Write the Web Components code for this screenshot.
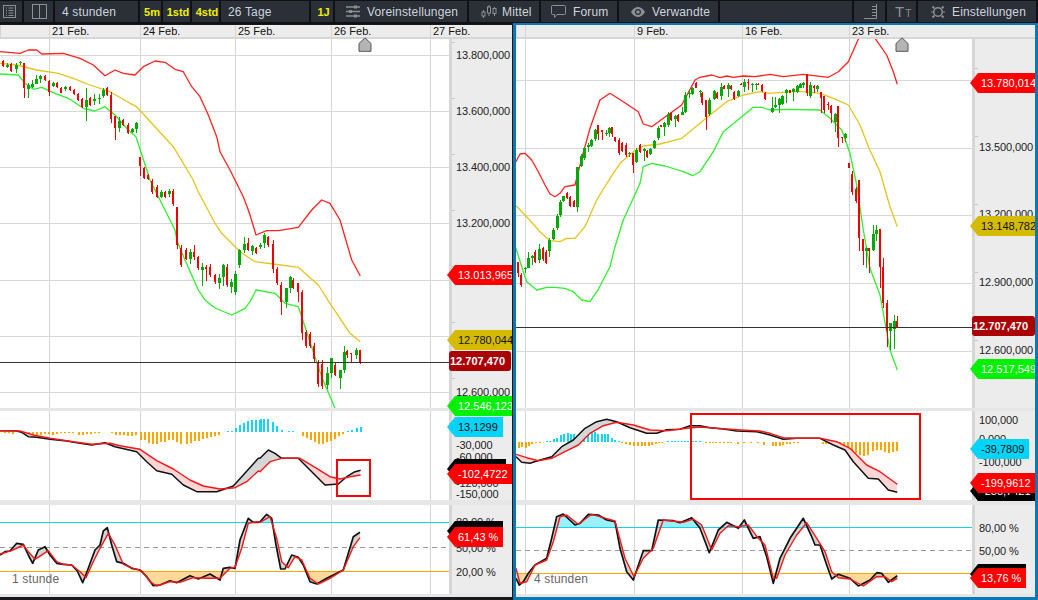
<!DOCTYPE html>
<html lang="de">
<head>
<meta charset="utf-8">
<title>Chart</title>
<style>
  html, body { margin: 0; height: 100%; background: #17191d; overflow: hidden; }
  body { display: flex; flex-direction: column; width: 1038px; height: 600px; font-family: "Liberation Sans", Arial, sans-serif; }
  .charts { display: flex; gap: 1px; height: 576px; }
</style>
</head>
<body>
<trade-toolbar>
  <tool-item style="width:24px;--pad:3px"><tool-icon name="list"></tool-icon></tool-item>
  <tool-item style="width:31px;--pad:8px"><tool-icon name="split"></tool-icon></tool-item>
  <tool-item style="width:85px;--pad:7px">4 stunden</tool-item>
  <tool-item hot style="width:23px">5m</tool-item>
  <tool-item hot style="width:29px">1std</tool-item>
  <tool-item hot style="width:29px">4std</tool-item>
  <tool-item style="width:90px;--pad:7px">26 Tage</tool-item>
  <tool-item hot style="width:24px">1J</tool-item>
  <tool-item style="width:134px;--pad:11px;--gap:7px"><tool-icon name="sliders"></tool-icon>Voreinstellungen</tool-item>
  <tool-item style="width:72px;--pad:12px;--gap:5px"><tool-icon name="candles"></tool-icon>Mittel</tool-item>
  <tool-item style="width:78px;--pad:10px;--gap:7px"><tool-icon name="bubble"></tool-icon>Forum</tool-item>
  <tool-item style="width:101px;--pad:12px;--gap:7px"><tool-icon name="eye"></tool-icon>Verwandte</tool-item>
  <tool-item style="width:134px"></tool-item>
  <tool-item style="width:33px;--pad:10px"><tool-icon name="rows"></tool-icon></tool-item>
  <tool-item style="width:31px;--pad:8px"><tool-icon name="size"></tool-icon></tool-item>
  <tool-item style="width:120px;--pad:13px;--gap:7px"><tool-icon name="gear"></tool-icon>Einstellungen</tool-item>
</trade-toolbar>
<div class="charts">
  <chart-panel name="left"></chart-panel>
  <chart-panel name="right" active></chart-panel>
</div>

<script>
// reference coordinates were read from 3x crops, so scale them back to page pixels
function crop(ox, oy, flat) {
  const pts = [];
  for (let i = 0; i < flat.length; i += 2) pts.push([ox + flat[i] / 3, oy + flat[i + 1] / 3]);
  return pts;
}

function candles(ox, oy, list) {
  return list.map(([x, hi, lo, c, top, bot]) => {
    const range = lo - hi;
    return {
      x: ox + x / 3,
      hi: oy + hi / 3,
      lo: oy + lo / 3,
      c,
      top: oy + (top === undefined ? hi + range * 0.12 : top) / 3,
      bot: oy + (bot === undefined ? lo - range * 0.12 : bot) / 3,
    };
  });
}

function bars(ox, oy, base, list) {
  return list.map(([x, d, c]) => ({ x: ox + x / 3, y: oy + base / 3, d: d / 3, c }));
}

const O = "#ffa500", C = "#16d4f5";

const CHARTS = {
  left: {
    x0: 0, x1: 449,
    cells: [[49, ""], [91, "21 Feb."], [95, "24 Feb."], [96, "25 Feb."], [99, "26 Feb."], [82, "27 Feb."]],
    vlines: [49, 140, 235, 331, 430],
    hlines: [55, 111, 167, 223, 280, 336, 392],
    ticks: [42, 98, 154, 210, 266, 322, 378],
    priceY: 362,
    marker: 358,
    labels: {
      main: [["13.800,000", 55], ["13.600,000", 111], ["13.400,000", 167], ["13.200,000", 223], ["12.600,000", 392]],
      macd: [["-30,000", 445], ["-60,000", 457], ["-120,000", 483], ["-150,000", 494]],
      stoch: [["80,00 %", 522], ["50,00 %", 548], ["20,00 %", 572]],
    },
    labelX: 456,
    tags: [
      { text: "13.013,965", y: 265, x: 447, w: 65, bg: "#ff0000", fg: "#fff" },
      { text: "12.780,044", y: 330, x: 447, w: 65, bg: "#d4bb00", fg: "#111" },
      { text: "12.707,470", y: 351, x: 449, w: 62, bg: "#ab0000", fg: "#fff", bold: true },
      { text: "12.546,123", y: 396, x: 447, w: 65, bg: "#00f000", fg: "#fff" },
      { text: "13,1299", y: 417, x: 447, w: 56, bg: "#00d4f8", fg: "#111" },
      { text: "", y: 459, x: 447, w: 59, bg: "#000", fg: "#fff" },
      { text: "-102,4722", y: 464, x: 447, w: 65, bg: "#ff0000", fg: "#fff" },
      { text: "", y: 521, x: 447, w: 56, bg: "#000", fg: "#fff" },
      { text: "61,43 %", y: 527, x: 447, w: 56, bg: "#ff0000", fg: "#fff" },
    ],
    boxes: [{ x: 336, y: 459, w: 35, h: 38 }],
    tf: { text: "1 stunde", x: 12 },
    levels: [522, 547, 571],
    upper: [...crop(0, 50, [0,5, 60,10, 85,0, 110,0, 125,12, 190,10, 240,25, 280,45, 315,77, 345,60, 370,70, 405,75, 430,50, 465,33, 495,37, 525,58, 550,65, 575,110, 600,140, 625,195, 650,260, 660,305, 690,360, 730,440, 745,480]), ...crop(250, 190, [0,75, 18,135, 50,122, 85,122, 145,112, 185,60, 215,30, 240,40, 270,90, 305,210, 331,258])],
    mid: [...crop(0, 50, [0,40, 50,45, 110,60, 175,70, 220,85, 270,105, 330,125, 390,160, 410,170, 460,225, 520,290, 580,390]), ...crop(165, 190, [97,0, 150,100, 170,130, 225,185, 270,215]), ...crop(250, 190, [30,217, 70,222, 145,232, 205,285, 240,340, 300,430, 331,455])],
    lower: [...crop(0, 50, [0,72, 55,75, 75,100, 100,118, 125,112, 165,130, 205,145, 250,175, 285,183, 315,170, 345,195, 385,240, 408,260, 450,390, 490,470, 525,540]), ...crop(165, 190, [35,150, 60,210, 100,300, 120,330, 150,354, 200,375, 240,355]), ...crop(250, 190, [0,335, 18,300, 75,310, 105,340, 145,350, 165,410, 190,485, 215,560, 255,655])],
    candles: [
      ...candles(0, 50, [[10,30,50,"r"],[22,40,55,"g",45,50],[33,38,65,"r"],[49,38,68,"g",45,58],[61,32,45,"g",36,40],[72,38,143,"r",38,113],[85,100,143,"g",106,116],[97,90,115,"g",102,110],[109,75,103,"g",88,103],[121,75,98,"g",78,88],[134,75,93,"r"],[147,90,137,"r",92,125],[160,95,112,"g",100,107],[171,97,113,"r"],[183,110,130,"r"],[196,108,122,"g",112,118],[210,108,122,"r"],[222,118,135,"r"],[234,128,152,"r"],[246,143,175,"r"],[259,113,212,"g",150,170],[271,140,168,"r"],[283,132,165,"g",147,152],[298,132,162,"g",143,146],[310,113,145,"g",120,137],[322,112,138,"r"],[333,125,218,"r"],[345,198,270,"r",198,235],[358,200,247,"g",212,233],[369,208,228,"r"],[384,220,252,"r"],[397,235,250,"g",238,245],[409,215,250,"g",218,236],[420,322,378,"r",322,348],[432,350,388,"r"],[444,372,390,"r"],[456,388,432,"r"],[470,405,445,"r"],[484,420,443,"g",427,440],[495,423,443,"r"],[508,418,440,"g",423,431],[519,418,467,"r"]]),
      ...candles(165, 190, [[37,52,178,"r",52,165],[49,165,232,"r"],[62,175,210,"r"],[76,178,222,"g",186,207],[87,165,210,"r",185,200],[99,197,240,"r"],[112,220,288,"g",232,240],[124,225,272,"r",232,237],[136,222,262,"r",232,255],[150,252,282,"r",254,275],[163,252,298,"g",264,280],[175,222,288,"g",225,262],[187,222,292,"r"],[199,268,308,"g",275,290],[211,243,315,"g"],[223,178,235,"g",180,225],[238,140,190,"g",162,180],[249,145,182,"r",160,180],[261,165,195,"g",168,182],[274,170,192,"r"],[286,160,178,"g",165,172],[297,130,175,"g",135,160]]),
      ...candles(250, 190, [[55,137,170,"r"],[69,150,250,"r"],[81,230,285,"r"],[93,275,375,"r",285,335],[107,295,355,"g",295,335],[119,258,310,"g",262,293],[130,265,297,"r"],[143,280,335,"r",280,305],[155,300,450,"r",305,430],[167,420,475,"r"],[179,425,475,"r"],[191,460,515,"r"],[205,510,590,"r"],[217,510,597,"r"],[231,530,597,"g",550,585],[243,505,565,"g",505,548],[255,520,558,"r"],[269,540,597,"g",540,565],[281,468,550,"g",487,540],[291,480,505,"r",483,495],[304,490,520,"r",490,493],[319,475,507,"g",480,495],[331,480,522,"r",480,515]]),
    ],
    histogram: [
      ...bars(0, 405, 80, [[13,3,O],[25,3,O],[37,8,O],[49,2,O],[61,2,O],[73,6,O],[85,10,O],[97,12,O],[109,9,O],[121,9,O],[133,7,O],[145,8,O],[157,10,O],[169,7,O],[181,5,O],[193,5,O],[205,4,O],[217,5,O],[233,9,O],[245,10,O],[257,7,O],[269,6,O],[281,4,O],[295,3,O],[333,3,O],[345,10,O],[357,11,O],[369,10,O],[381,12,O],[393,14,O],[405,10,O],[421,25,O],[433,26,O],[445,33,O],[457,36,O],[469,36,O],[481,32,O],[493,30,O],[505,26,O],[517,26,O],[529,32,O],[541,36,O],[557,37,O],[569,33,O],[581,28,O],[593,27,O],[605,22,O],[617,18,O],[629,16,O],[641,14,O],[653,10,O],[681,-2,C],[693,-3,C],[705,-10,C],[717,-20,C],[729,-27,C],[741,-32,C],[753,-34,C],[765,-34,C],[777,-34,C]]),
      ...bars(260, 405, 80, [[0,-38,C],[10,-38,C],[22,-38,C],[37,-28,C],[49,-17,C],[62,-5,C],[85,-3,C],[97,-3,C],[127,12,O],[139,20,O],[151,26,O],[163,32,O],[175,36,O],[187,38,O],[199,32,O],[211,27,O],[223,22,O],[235,14,O],[247,6,O],[260,-2,C],[272,-6,C],[287,-12,C],[299,-14,C]]),
    ],
    macdBlack: [...crop(0, 405, [0,77, 45,77, 65,82, 85,95, 110,97, 150,103, 200,108, 240,115, 275,120, 315,113, 345,125, 410,140, 440,170, 470,197, 515,208, 550,240, 590,260, 650,260, 700,243, 730,210, 775,160]), ...crop(260, 405, [0,160, 25,135, 45,145, 65,160, 115,160, 150,195, 195,240, 235,237, 260,215, 285,200, 302,196])],
    macdRed: [...crop(0, 405, [0,77, 60,78, 100,90, 150,100, 220,110, 275,118, 330,115, 360,122, 420,133, 470,167, 520,192, 570,225, 610,243, 660,252, 705,248, 740,230, 775,198]), ...crop(260, 405, [0,200, 30,170, 65,160, 120,160, 170,190, 210,215, 240,222, 270,215, 302,210])],
    stochBlack: [...crop(0, 405, [0,450, 15,440, 30,438, 50,415, 70,418, 85,450, 98,475, 115,435, 135,425, 150,450, 170,475, 190,478, 215,480, 232,498, 248,533, 265,490, 285,435, 300,420, 310,378, 322,368, 335,420, 350,470, 370,475, 395,490, 420,495, 440,515, 460,542, 480,540, 510,527, 530,533, 570,512, 595,522, 630,507, 660,525, 670,490, 690,487, 705,490, 720,405, 745,340, 760,352, 775,352]), ...crop(260, 405, [0,350, 20,328, 35,340, 48,420, 62,492, 75,492, 95,450, 115,457, 130,480, 150,530, 170,537, 200,520, 250,495, 280,395, 300,382])],
    stochRed: [...crop(0, 405, [0,447, 35,437, 70,420, 85,440, 105,463, 145,437, 170,470, 190,478, 215,480, 240,500, 258,518, 280,470, 300,430, 325,385, 345,420, 370,478, 400,490, 425,497, 450,530, 470,543, 510,530, 540,532, 580,518, 620,520, 660,520, 690,490, 705,487, 725,430, 745,355, 775,350]), ...crop(260, 405, [0,352, 30,335, 50,400, 65,470, 85,488, 105,455, 125,465, 150,520, 175,537, 210,520, 250,495, 280,425, 300,398])],
  },
  right: {
    x0: 516, x1: 972,
    cells: [[9, ""], [109, ""], [108, "9 Feb."], [107, "16 Feb."], [123, "23 Feb."]],
    vlines: [525, 634, 742, 849],
    hlines: [80, 148, 215, 283, 351],
    ticks: [68, 136, 204, 272, 340],
    priceY: 327,
    marker: 895,
    labels: {
      main: [["13.800,000", 80], ["13.500,000", 147], ["13.200,000", 214], ["12.900,000", 282], ["12.600,000", 350]],
      macd: [["100,000", 420], ["0,000", 439], ["-100,000", 462]],
      stoch: [["80,00 %", 528], ["50,00 %", 551], ["20,00 %", 574]],
    },
    labelX: 979,
    tags: [
      { text: "13.780,014", y: 73, x: 970, w: 65, bg: "#ff0000", fg: "#fff" },
      { text: "13.148,782", y: 216, x: 970, w: 65, bg: "#d4bb00", fg: "#111" },
      { text: "12.707,470", y: 316, x: 972, w: 63, bg: "#ab0000", fg: "#fff", bold: true },
      { text: "12.517,549", y: 359, x: 970, w: 65, bg: "#00f000", fg: "#fff" },
      { text: "-39,7809", y: 439, x: 970, w: 59, bg: "#00d4f8", fg: "#111" },
      { text: "-255,7421", y: 481, x: 970, w: 65, bg: "#000", fg: "#fff" },
      { text: "-199,9612", y: 473, x: 970, w: 65, bg: "#ff0000", fg: "#fff" },
      { text: "", y: 564, x: 970, w: 56, bg: "#000", fg: "#fff" },
      { text: "13,76 %", y: 568, x: 970, w: 56, bg: "#ff0000", fg: "#fff" },
    ],
    boxes: [{ x: 690, y: 413, w: 231, h: 87 }],
    tf: { text: "4 stunden", x: 534 },
    levels: [527, 550, 573],
    upper: [...crop(510, 50, [18,335, 30,312, 45,310, 65,330, 85,365, 105,405, 120,432, 135,440, 150,430, 165,410, 195,405, 215,325, 240,235, 270,150, 300,130, 340,155, 385,185, 400,222, 425,230, 460,205, 515,165, 555,90, 570,82, 605,75, 630,83, 650,78, 670,82, 700,78, 735,80, 780,73]), ...crop(770, 30, [0,133, 40,140, 100,133, 175,142, 205,125, 235,95, 255,50, 266,25, 280,-10, 300,-10, 315,25, 350,75, 370,125, 382,163])],
    mid: [...crop(510, 50, [18,467, 50,500, 90,545, 120,572, 150,575, 170,565, 195,565, 225,530, 260,450, 300,385, 330,340, 370,305, 400,288, 450,282, 515,265, 560,228, 600,195, 650,155, 700,135, 750,125]), ...crop(770, 30, [0,190, 60,185, 100,185, 150,190, 190,205, 235,225, 270,285, 297,355, 330,425, 360,530, 382,590])],
    lower: [...crop(510, 50, [18,595, 35,650, 50,695, 80,720, 110,712, 135,712, 165,715, 190,725, 215,750, 240,755, 265,718, 300,650, 315,590, 340,510, 365,455, 390,400, 400,350, 425,340, 465,348, 520,365, 548,377, 570,365, 610,305, 640,245, 690,205, 730,172, 755,172]), ...crop(770, 30, [0,240, 50,238, 150,240, 180,265, 215,300, 240,370, 260,465, 280,600]), ...crop(770, 210, [300,175, 330,255, 360,420, 382,480])],
    candles: [
      ...candles(510, 50, [[24,635,680,"r",635,670],[34,670,710,"r"],[45,650,670,"g",653,657],[55,605,655,"g",625,655],[67,615,645,"g",617,625],[76,600,640,"r"],[88,582,640,"g",597,630],[98,590,632,"r"],[108,600,643,"r"],[118,565,622,"g",570,602],[130,535,570,"g"],[140,492,540,"g"],[151,450,500,"g",455,495],[160,437,455,"g"],[171,425,448,"r"],[180,437,472,"r"],[192,450,472,"r"],[202,350,485,"g",350,472],[212,312,352,"g"],[222,290,330,"g"],[235,280,305,"g",285,292],[244,268,290,"g"],[254,237,272,"g"],[265,225,270,"r",225,252],[275,240,270,"r",240,245],[287,240,257,"g",250,253],[296,232,260,"g",233,250],[306,230,262,"r",232,252],[314,260,275,"r"],[326,265,315,"r"],[336,275,305,"r"],[348,280,320,"r"],[358,305,320,"g",310,313],[369,310,368,"r",310,345],[379,295,340,"g"],[390,282,310,"r"],[401,295,332,"g",298,302],[411,300,325,"r"],[421,295,315,"g"],[433,270,298,"g"],[443,228,270,"g"],[453,225,232,"r"],[463,215,258,"g",218,232],[475,185,230,"g"],[484,185,212,"r"],[496,195,230,"g",198,208],[505,193,215,"r"],[517,170,195,"g",186,195],[526,125,188,"g",135,186],[536,120,145,"g",128,132],[547,112,135,"g"],[557,95,115,"r"],[569,120,142,"g",124,127],[577,125,165,"r"],[589,150,240,"r",150,200],[598,143,197,"g"],[611,120,150,"g"],[621,125,148,"r"],[632,100,150,"g",110,138],[642,105,118,"r"],[654,100,140,"g",104,118],[663,105,120,"r"],[673,122,150,"r"],[683,120,140,"g"],[692,100,105,"r"],[703,88,125,"g",96,110],[714,88,120,"r",97,100],[725,100,125,"g",103,106],[737,100,120,"g",103,106],[745,100,105,"r"],[756,102,125,"r"],[765,125,150,"r"]]),
      ...candles(770, 30, [[7,200,250,"g",235,245],[16,200,235,"g",225,232],[28,205,250,"g",208,225],[37,195,225,"g"],[49,178,220,"g",180,190],[60,180,190,"r"],[70,175,213,"g",178,186],[80,165,190,"g"],[91,160,175,"g"],[100,155,175,"g",158,165],[110,133,198,"r",133,190],[121,155,203,"g",165,198],[131,165,190,"r",168,175],[141,165,185,"g",168,178],[152,185,250,"r",185,205],[162,198,250,"r",198,240],[173,215,240,"r",222,225],[183,225,280,"r",228,250],[196,250,305,"g",252,275],[205,228,352,"r",228,325],[216,320,340,"r",322,325],[226,310,335,"g",313,325],[237,398,415,"r"],[246,423,495,"r"],[257,470,520,"r"]]),
      ...candles(770, 210, [[267,-90,122,"r",-90,83],[278,87,165,"r",87,122],[289,110,175,"g",113,122],[298,115,190,"r",115,122],[310,45,122,"g",72,120],[319,45,92,"g",60,72],[330,57,235,"r",57,170],[339,145,295,"r",172,278],[352,270,412,"r",278,362],[361,340,420,"g",340,362],[373,315,417,"g",333,357],[382,318,355,"r",333,352]]),
    ],
    histogram: [
      ...bars(510, 405, 112, [[24,16,O],[34,14,O],[44,16,O],[54,10,O],[64,6,O],[74,3,O],[86,2,O],[108,-3,C],[118,-5,C],[128,-10,C],[138,-14,C],[150,-22,C],[160,-26,C],[170,-27,C],[180,-25,C],[190,-24,C],[200,-22,C],[210,-24,C],[220,-26,C],[232,-30,C],[242,-28,C],[252,-30,C],[262,-26,C],[272,-26,C],[282,-24,C],[292,-24,C],[302,-14,C],[312,-8,C],[324,-3,C],[334,2,O],[346,4,O],[358,7,O],[370,10,O],[380,10,O],[392,10,O],[402,10,O],[414,10,O],[424,9,O],[434,5,O],[444,2,O],[454,2,O],[472,-3,C],[482,-3,C],[492,-3,C],[502,-3,C],[512,-3,C],[522,-4,C],[532,-4,C],[546,-4,C],[556,-5,C],[568,-5,C],[586,2,O],[596,2,O],[606,2,O],[616,2,O],[626,2,O],[640,2,O],[650,2,O],[660,2,O],[680,6,O],[700,2,O],[720,2,O],[740,2,O],[760,8,O]]),
      ...bars(770, 405, 112, [[5,10,O],[15,10,O],[26,10,O],[36,8,O],[47,6,O],[58,4,O],[70,2,O],[80,2,O],[155,4,O],[165,6,O],[175,4,O],[185,8,O],[196,12,O],[207,16,O],[220,24,O],[232,26,O],[244,28,O],[256,32,O],[268,38,O],[280,40,O],[292,38,O],[305,26,O],[317,24,O],[330,24,O],[342,28,O],[354,32,O],[365,30,O],[378,25,O]]),
    ],
    macdBlack: [...crop(510, 405, [18,155, 35,172, 60,175, 90,165, 125,155, 155,125, 190,105, 225,70, 260,50, 290,43, 320,50, 360,68, 410,85, 440,85, 470,74, 510,73, 540,62, 570,62, 600,68, 640,72, 680,78, 740,80]), ...crop(770, 405, [0,90, 40,103, 80,100, 150,100, 190,120, 225,135, 250,170, 295,220, 325,222, 355,255, 382,262])],
    macdRed: [...crop(510, 405, [18,148, 50,158, 85,167, 125,160, 165,140, 205,120, 240,85, 280,62, 320,52, 370,60, 420,75, 470,77, 530,70, 570,66, 620,70, 680,74, 750,78]), ...crop(770, 405, [0,85, 40,98, 80,100, 150,100, 200,110, 240,130, 290,180, 330,200, 382,238])],
    stochBlack: [...crop(510, 405, [18,520, 28,540, 40,530, 55,505, 75,480, 110,460, 125,400, 140,335, 160,327, 195,360, 210,355, 235,328, 265,330, 290,345, 315,350, 330,430, 350,500, 370,525, 400,437, 425,437, 445,345, 490,347, 510,353, 545,338, 570,370, 598,443, 625,375, 650,352, 685,370, 703,345, 730,400, 750,395, 770,455, 790,535]), ...crop(770, 405, [30,460, 60,400, 100,340, 125,395, 135,420, 150,420, 170,480, 185,522, 205,508, 240,520, 265,543, 300,525, 320,503, 335,505, 355,532, 382,512])],
    stochRed: [...crop(510, 405, [18,490, 30,535, 50,530, 75,480, 110,465, 130,410, 150,335, 170,330, 205,358, 245,328, 280,338, 315,348, 345,460, 372,515, 400,460, 430,430, 460,345, 520,352, 550,342, 575,360, 605,435, 630,385, 655,362, 685,365, 715,360, 745,400, 765,420, 790,520]), ...crop(770, 405, [20,520, 45,450, 80,390, 110,353, 140,400, 165,440, 185,500, 205,518, 240,522, 280,543, 320,515, 345,515, 365,530, 382,520])],
  },
};

const path = pts => "M" + pts.map(p => p[0].toFixed(1) + " " + p[1].toFixed(1)).join("L");
const poly = (pts, fill) => `<path d="${path(pts)}Z" fill="${fill}"/>`;
const line = (pts, color, w) => `<path d="${path(pts)}" fill="none" stroke="${color}" stroke-width="${w}" stroke-linejoin="round"/>`;

function yAt(pts, x) {
  for (let i = 1; i < pts.length; i++) {
    if (x <= pts[i][0]) {
      const [ax, ay] = pts[i - 1], [bx, by] = pts[i];
      return ay + (by - ay) * (x - ax) / ((bx - ax) || 1);
    }
  }
  return pts[pts.length - 1][1];
}

// filled area between two lines, one colour per side
function ribbon(a, b, colA, colB) {
  const start = Math.max(a[0][0], b[0][0]);
  const end = Math.min(a[a.length - 1][0], b[b.length - 1][0]);
  let out = "", run = [], sign = 0;
  const flush = () => {
    if (run.length > 1) {
      const back = run.map(r => [r[0], r[2]]).reverse();
      out += poly([...run.map(r => [r[0], r[1]]), ...back], sign > 0 ? colA : colB);
    }
    run = [];
  };
  for (let x = start; x <= end; x += 1) {
    const ya = yAt(a, x), yb = yAt(b, x), s = ya < yb ? 1 : -1;
    if (s !== sign) {
      if (run.length) run.push([x, ya, yb]);
      flush();
      sign = s;
    }
    run.push([x, ya, yb]);
  }
  flush();
  return out;
}

// area between a line and a horizontal level, on one side of it only
function levelFill(pts, level, above, color) {
  const start = pts[0][0], end = pts[pts.length - 1][0];
  const top = [];
  for (let x = start; x <= end; x += 1) {
    const y = yAt(pts, x);
    top.push([x, above ? Math.min(y, level) : Math.max(y, level)]);
  }
  return poly([[start, level], ...top, [end, level]], color);
}

class ToolIcon extends HTMLElement {
  connectedCallback() {
    this.attachShadow({ mode: "open" });
    const icons = {
      list: `<svg width="16" height="14" viewBox="0 0 16 14"><rect x=".5" y=".5" width="12" height="12" fill="none" stroke="#8b9097"/><path d="M3 3h1M3 5.500h1M3 8h1M3 10.500h1M5.500 3h5M5.500 5.500h5M5.500 8h5M5.500 10.500h5" stroke="#8b9097"/></svg>`,
      split: `<svg width="15" height="15" viewBox="0 0 15 15"><rect x=".5" y=".5" width="14" height="14" fill="none" stroke="#8b9097"/><path d="M7.500 0v15" stroke="#8b9097"/></svg>`,
      sliders: `<svg width="14" height="13" viewBox="0 0 14 13"><path d="M0 2h8M11 2h3M0 6.500h3M6 6.500h8M0 11h8M11 11h3" stroke="#8b9097" stroke-width="1.400"/><path d="M8 .5h3v3H8zM3 5h3v3H3zM8 9.500h3v3H8z" fill="#8b9097"/></svg>`,
      candles: `<svg width="16" height="13" viewBox="0 0 16 13"><path d="M2.500 5v8M8 0v11M13.500 2v9" stroke="#8b9097"/><rect x="1" y="7" width="3" height="4" fill="#2b2f37" stroke="#8b9097"/><rect x="6.500" y="2" width="3" height="6" fill="#2b2f37" stroke="#8b9097"/><rect x="12" y="3.500" width="3" height="5" fill="#2b2f37" stroke="#8b9097"/></svg>`,
      bubble: `<svg width="15" height="14" viewBox="0 0 15 14"><path d="M1.500.5h12a1 1 0 0 1 1 1v7a1 1 0 0 1-1 1H6l-2.500 3v-3h-2a1 1 0 0 1-1-1v-7a1 1 0 0 1 1-1z" fill="none" stroke="#8b9097"/></svg>`,
      eye: `<svg width="14" height="10" viewBox="0 0 14 10"><path d="M0 5C2 1.500 4.500 0 7 0s5 1.500 7 5c-2 3.500-4.500 5-7 5S2 8.500 0 5z" fill="#8b9097"/><circle cx="7" cy="5" r="3" fill="#2b2f37"/><circle cx="7" cy="5" r="1.800" fill="#8b9097"/></svg>`,
      rows: `<svg width="15" height="15" viewBox="0 0 15 15"><path d="M12.500 0v14.500H0M8 2.500h4M8 5.500h4M8 8.500h4M8 11.500h4" fill="none" stroke="#8b9097"/></svg>`,
      gear: `<svg width="14" height="14" viewBox="0 0 14 14"><circle cx="7" cy="7" r="4.300" fill="none" stroke="#8b9097" stroke-width="1.500"/><path d="M3.200 3.200 1.500 1.500M10.800 3.200l1.700-1.700M3.200 10.800l-1.700 1.700M10.800 10.800l1.700 1.700M1.500 7H.5M13.500 7h-1" stroke="#8b9097" stroke-width="2"/></svg>`,
    };
    this.shadowRoot.innerHTML = `
      <style>
        :host { display: inline-flex; align-items: center; }
        svg { display: block; }
        .size { color: #8b9097; white-space: nowrap; font-size: 15px; }
        .size small { font-size: 10px; margin-left: 1px; }
      </style>
      ${this.getAttribute("name") === "size" ? `<span class="size">T<small>T</small></span>` : icons[this.getAttribute("name")]}
    `;
  }
}
customElements.define("tool-icon", ToolIcon);

class ToolItem extends HTMLElement {
  connectedCallback() {
    this.attachShadow({ mode: "open" });
    this.shadowRoot.innerHTML = `
      <style>
        :host {
          display: flex;
          align-items: center;
          box-sizing: border-box;
          height: 100%;
          padding-left: var(--pad, 0);
          gap: var(--gap, 0);
          border-right: 2px solid #0f1114;
          color: #cdd5dd;
          font-size: 12px;
          letter-spacing: .15px;
          white-space: nowrap;
          flex: none;
        }
        :host([hot]) {
          justify-content: center;
          padding-left: 3px;
          color: #f2f000;
          font-weight: bold;
          font-size: 11px;
          letter-spacing: 0;
        }
      </style>
      <slot></slot>
    `;
  }
}
customElements.define("tool-item", ToolItem);

class TradeToolbar extends HTMLElement {
  connectedCallback() {
    this.attachShadow({ mode: "open" });
    this.shadowRoot.innerHTML = `
      <style>
        :host {
          display: flex;
          box-sizing: border-box;
          height: 24px;
          flex: none;
          background: #2b2f37;
          border-top: 1px solid #0f1114;
          border-bottom: 2px solid #0f1114;
        }
      </style>
      <slot></slot>
    `;
  }
}
customElements.define("trade-toolbar", TradeToolbar);

class TimeAxis extends HTMLElement {
  connectedCallback() {
    this.attachShadow({ mode: "open" });
    const cells = this.cells.map(([w, text]) => `<div class="cell" style="width:${w}px">${text}</div>`).join("");
    this.shadowRoot.innerHTML = `
      <style>
        :host {
          display: flex;
          flex: none;
          height: 14px;
          box-sizing: border-box;
          background: #ececec;
          border-bottom: 2px solid #d6d6d6;
          font-size: 11px;
          line-height: 13px;
          color: #111;
          overflow: hidden;
        }
        .cell { box-sizing: border-box; flex: none; padding-left: 2px; border-left: 1px solid #d4d4d4; white-space: nowrap; }
        .cell:first-child { border-left: 0; }
      </style>
      ${cells}
    `;
  }
}
customElements.define("time-axis", TimeAxis);

class ChartPane extends HTMLElement {
  connectedCallback() {
    this.attachShadow({ mode: "open" });
    const { chart, top, height, body, labels, ticks } = this;
    const width = chart.x1 - chart.x0;
    const vlines = chart.vlines.map(x => `<path d="M${x + .5} ${top}V${top + height}" stroke="#d6d6d6" shape-rendering="crispEdges"/>`).join("");
    const labelHtml = labels.map(([t, y]) => `<span class="label" style="top:${y - top - 7}px;left:${chart.labelX - chart.x1}px">${t}</span>`).join("");
    const tickHtml = (ticks || []).map(y => `<i class="tick" style="top:${y - top}px"></i>`).join("");
    this.shadowRoot.innerHTML = `
      <style>
        :host { display: flex; flex: none; height: ${height}px; background: #fff; }
        svg { display: block; flex: none; }
        .scale { position: relative; flex: 1; background: #ececec; box-shadow: inset 3px 0 0 #d6d6d6; overflow: hidden; }
        .label { position: absolute; font-size: 11px; line-height: 14px; color: #222; letter-spacing: -.1px; white-space: nowrap; }
        .tick { position: absolute; left: 3px; width: 3px; height: 1px; background: #c4c4c4; }
      </style>
      <svg width="${width}" height="${height}" viewBox="${chart.x0} ${top} ${width} ${height}">
        ${vlines}${body}
      </svg>
      <div class="scale">${tickHtml}${labelHtml}</div>
    `;
  }
}
customElements.define("chart-pane", ChartPane);

class PriceTag extends HTMLElement {
  connectedCallback() {
    this.attachShadow({ mode: "open" });
    const flat = this.hasAttribute("bold");
    this.shadowRoot.innerHTML = `
      <style>
        :host {
          position: absolute;
          display: flex;
          align-items: center;
          box-sizing: border-box;
          height: 20px;
          padding-left: ${flat ? 1 : 11}px;
          font-size: 11px;
          white-space: nowrap;
          overflow: hidden;
          ${flat ? "border-radius: 3px; font-weight: bold;" : "clip-path: polygon(0 50%, 8px 0, 100% 0, 100% 100%, 8px 100%);"}
        }
      </style>
      <slot></slot>
    `;
  }
}
customElements.define("price-tag", PriceTag);

class ChartPanel extends HTMLElement {
  connectedCallback() {
    this.attachShadow({ mode: "open" });
    const chart = CHARTS[this.getAttribute("name")];
    const active = this.hasAttribute("active");
    const originY = active ? 23 : 24;
    const originX = active ? 513 : 0;
    const borderTop = active ? 2 : 1;
    const borderLeft = active ? 3 : 0;
    this.shadowRoot.innerHTML = `
      <style>
        :host {
          position: relative;
          display: flex;
          flex-direction: column;
          box-sizing: border-box;
          width: 512px;
          flex: none;
          border-top: 1px solid #17191d;
          border-bottom: 3px solid #17191d;
          overflow: hidden;
        }
        :host([active]) {
          width: 525px;
          margin-top: -1px;
          height: 577px;
          border: 3px solid #0a78b4;
          border-top-width: 2px;
        }
        .sep { flex: none; background: #e6e6e6; }
        .box { position: absolute; box-sizing: border-box; border: 2px solid #f00; }
        .timeframe { position: absolute; top: ${580 - originY - 8 - borderTop}px; font-size: 12px; line-height: 14px; color: #666; letter-spacing: .15px; }
        .marker { position: absolute; display: block; }
      </style>
    `;
    const root = this.shadowRoot;

    const axis = document.createElement("time-axis");
    axis.cells = chart.cells;
    root.append(axis);

    const addPane = (top, height, body, labels, ticks) => {
      const pane = document.createElement("chart-pane");
      Object.assign(pane, { chart, top, height, body, labels, ticks });
      root.append(pane);
    };
    const addSep = h => {
      const sep = document.createElement("div");
      sep.className = "sep";
      sep.style.height = h + "px";
      root.append(sep);
    };

    addPane(39, 369, this.mainBody(chart), chart.labels.main, chart.ticks);
    addSep(3);
    addPane(411, 89, this.macdBody(chart), chart.labels.macd);
    addSep(5);
    addPane(505, 89, this.stochBody(chart), chart.labels.stoch);
    addSep(3);

    // overlays are given in page pixels, the absolute origin is the padding box
    const localX = x => x - originX - borderLeft;
    const localY = y => y - originY - borderTop;

    const marker = document.createElementNS("http://www.w3.org/2000/svg", "svg");
    marker.setAttribute("class", "marker");
    marker.setAttribute("width", "14");
    marker.setAttribute("height", "15");
    marker.setAttribute("viewBox", "0 0 14 15");
    marker.style.left = localX(chart.marker) + "px";
    marker.style.top = localY(37) + "px";
    marker.innerHTML = `<path d="M7 .8 13 6.500v7.800H1V6.500z" fill="#b4b4b4" stroke="#555"/>`;
    root.append(marker);

    chart.tags.forEach(t => {
      const tag = document.createElement("price-tag");
      if (t.bold) tag.setAttribute("bold", "");
      tag.textContent = t.text;
      tag.style.cssText = `left:${localX(t.x)}px;top:${localY(t.y)}px;width:${t.w}px;background:${t.bg};color:${t.fg}`;
      root.append(tag);
    });

    chart.boxes.forEach(b => {
      const box = document.createElement("div");
      box.className = "box";
      box.style.cssText = `left:${localX(b.x)}px;top:${localY(b.y)}px;width:${b.w}px;height:${b.h}px`;
      root.append(box);
    });

    const tf = document.createElement("div");
    tf.className = "timeframe";
    tf.textContent = chart.tf.text;
    tf.style.left = localX(chart.tf.x) + "px";
    root.append(tf);
  }

  mainBody(chart) {
    let s = chart.hlines.map(y => `<path d="M${chart.x0} ${y + .5}H${chart.x1}" stroke="#d8d8d8" shape-rendering="crispEdges"/>`).join("");
    s += line(chart.upper, "#ff2020", 1.3) + line(chart.mid, "#e6c41e", 1.3) + line(chart.lower, "#2ef02e", 1.3);
    s += `<g shape-rendering="crispEdges">`;
    chart.candles.forEach(k => {
      const green = k.c === "g";
      const x = Math.round(k.x);
      const fill = green ? "#06a806" : "#f20000";
      s += `<rect x="${x}" y="${k.hi.toFixed(1)}" width="1" height="${(k.lo - k.hi).toFixed(1)}" fill="${fill}"/>`;
      s += `<rect x="${x - 1}" y="${k.top.toFixed(1)}" width="${green ? 3 : 2}" height="${Math.max(k.bot - k.top, 1).toFixed(1)}" fill="${fill}"/>`;
    });
    s += `</g>`;
    s += `<path d="M${chart.x0} ${chart.priceY + .5}H${chart.x1}" stroke="#333" shape-rendering="crispEdges"/>`;
    return s;
  }

  macdBody(chart) {
    let s = `<g shape-rendering="crispEdges">`;
    chart.histogram.forEach(b => {
      const y = b.d > 0 ? b.y : b.y + b.d;
      s += `<rect x="${Math.round(b.x)}" y="${y.toFixed(1)}" width="2" height="${Math.abs(b.d).toFixed(1)}" fill="${b.c}"/>`;
    });
    s += `</g>`;
    s += ribbon(chart.macdRed, chart.macdBlack, "#ffd5d5", "#d6d6d6");
    s += line(chart.macdBlack, "#111", 1.5) + line(chart.macdRed, "#f01818", 1.4);
    return s;
  }

  stochBody(chart) {
    const [hi, mid, lo] = chart.levels;
    let s = levelFill(chart.stochRed, hi, true, "#9af0ff") + levelFill(chart.stochRed, lo, false, "#ffd99a");
    s += ribbon(chart.stochRed, chart.stochBlack, "rgba(130,130,130,.35)", "rgba(130,130,130,.35)");
    s += `<path d="M${chart.x0} ${hi + .5}H${chart.x1}" stroke="#12d2f2" shape-rendering="crispEdges"/>`;
    s += `<path d="M${chart.x0} ${mid + .5}H${chart.x1}" stroke="#999" stroke-dasharray="5 4" shape-rendering="crispEdges"/>`;
    s += `<path d="M${chart.x0} ${lo + .5}H${chart.x1}" stroke="#ffa500" shape-rendering="crispEdges"/>`;
    s += line(chart.stochBlack, "#111", 1.7) + line(chart.stochRed, "#f01818", 1.4);
    return s;
  }
}
customElements.define("chart-panel", ChartPanel);
</script>
</body>
</html>
